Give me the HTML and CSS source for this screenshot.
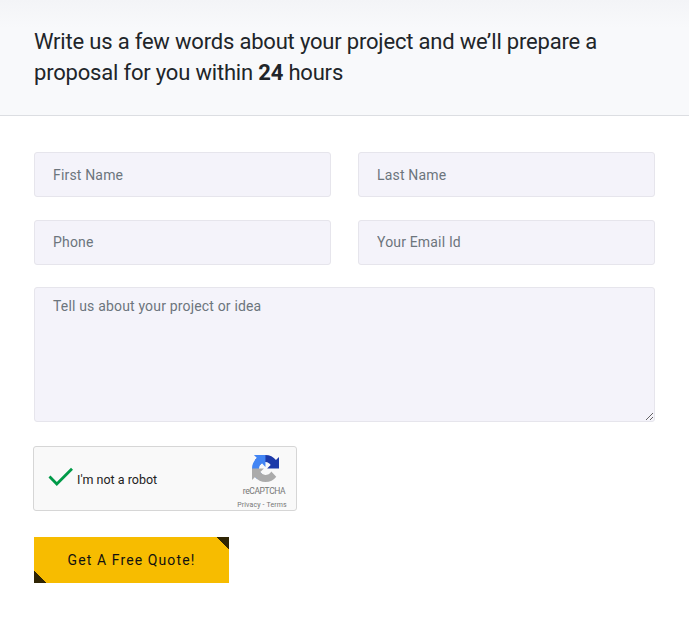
FILE: index.html
```html
<!DOCTYPE html>
<html lang="en">
<head>
<meta charset="utf-8">
<title>Get a quote</title>
<link rel="stylesheet" href="styles.css">
</head>
<body>
<header class="intro">
  <h1 class="intro-title">Write us a few words about your project and we’ll prepare a<br>proposal for you within <b>24</b> hours</h1>
</header>
<form class="quote-form">
  <div class="fields">
    <input class="field" type="text" placeholder="First Name">
    <input class="field" type="text" placeholder="Last Name">
    <input class="field raised" type="tel" placeholder="Phone">
    <input class="field raised" type="email" placeholder="Your Email Id">
  </div>
  <textarea class="field message" placeholder="Tell us about your project or idea"></textarea>
  <div class="captcha">
    <svg class="check" width="26" height="20" viewBox="0 0 26 20"><path d="M1.5 9.500 8.800 17 24 1.800" fill="none" stroke="#009a48" stroke-width="2.800"/></svg>
    <span class="captcha-label">I'm not a robot</span>
    <div class="brand">
      <svg class="brand-logo" width="27" height="27" viewBox="0 0 64 64">
        <path fill="#1c3aa9" d="M64 32c0-.5 0-.9 0-1.4V4.600l-7.200 7.200C50.900 4.600 42 0 32 0 21.600 0 12.300 5 6.500 12.700l11.800 11.900c1.200-2.100 2.700-4 4.600-5.300 2-1.500 4.800-2.800 8.700-2.800.5 0 .8.100 1.100.2 4.800.4 9 3 11.500 6.900l-8.400 8.400H64"/>
        <path fill="#4285f4" d="M31.900 0H4.500l7.200 7.200C4.600 13.100 0 22 0 32c0 10.400 5 19.700 12.700 25.500l11.900-11.800c-2.100-1.200-4-2.700-5.300-4.600-1.500-2-2.800-4.800-2.800-8.700 0-.5.100-.8.200-1.100.4-4.800 3-9 6.900-11.500l8.300 8.400V0"/>
        <path fill="#ababab" d="M0 32v27.400l7.200-7.200C13.100 59.400 22 64 32 64c10.400 0 19.700-5 25.500-12.700L45.700 39.400c-1.200 2.100-2.700 4-4.600 5.300-2 1.500-4.800 2.800-8.700 2.800-.5 0-.8-.1-1.100-.2-4.800-.4-9-3-11.500-6.900l8.400-8.400H0"/>
      </svg>
      <span class="brand-name">reCAPTCHA</span>
      <span class="brand-links">Privacy - Terms</span>
    </div>
  </div>
  <button class="submit" type="button">Get A Free Quote!</button>
</form>
</body>
</html>
```
FILE: styles.css
```css
* { box-sizing: border-box; }
body { margin: 0; background: #fff; font-family: Roboto, sans-serif; }
.intro {
  height: 116px;
  padding: 26px 34px 0;
  border-bottom: 1px solid #dcdee2;
  background: linear-gradient(#f3f4f7, #f8f9fb 28px);
}
.intro-title { margin: 0; font-size: 22px; font-weight: 400; line-height: 31px; letter-spacing: -.19px; color: #212529; white-space: nowrap; }
.quote-form { padding: 36px 34px 0; }
.fields { display: grid; grid-template-columns: 297px 297px; gap: 23px 27px; }
.field {
  width: 100%;
  height: 45px;
  padding: 0 18px;
  border: 1px solid #e6e5ec;
  border-radius: 3px;
  background: #f4f3fa;
  font: 400 14px/21px Roboto, sans-serif;
  letter-spacing: .17px;
}
.raised { padding-bottom: 2px; }
.field::placeholder { color: #6c757d; opacity: 1; }
.message { display: block; height: 135px; margin-top: 22px; padding-top: 8px; resize: both; }
.captcha {
  display: flex;
  align-items: center;
  width: 264px;
  height: 65px;
  margin: 24px 0 0 -1px;
  padding-left: 14px;
  border: 1px solid #d6d6d6;
  border-radius: 3px;
  background: #f9f9f9;
}
.check { margin-top: -4px; }
.captcha-label { margin: 1px 0 0 3px; font-size: 12.5px; color: #222; }
.brand { display: flex; flex-direction: column; align-items: center; width: 60px; margin: 8px 2px 0 auto; color: #777; }
.brand-logo { margin-left: 3px; }
.brand-name { margin-top: 3px; font-size: 8.5px; line-height: 12px; letter-spacing: -.4px; }
.brand-links { margin: 4px 0 0 -4px; font-size: 7px; line-height: 9px; letter-spacing: .13px; }
.submit {
  display: block;
  width: 195px;
  height: 46px;
  margin-top: 26px;
  padding: 0;
  border: 0;
  background:
    linear-gradient(45deg, #302504 8.8px, transparent 9px),
    linear-gradient(225deg, #302504 8.8px, transparent 9px),
    #f7bc00;
  color: #111;
  font: 400 14px Roboto, sans-serif;
  letter-spacing: 1.1px;
}
```
